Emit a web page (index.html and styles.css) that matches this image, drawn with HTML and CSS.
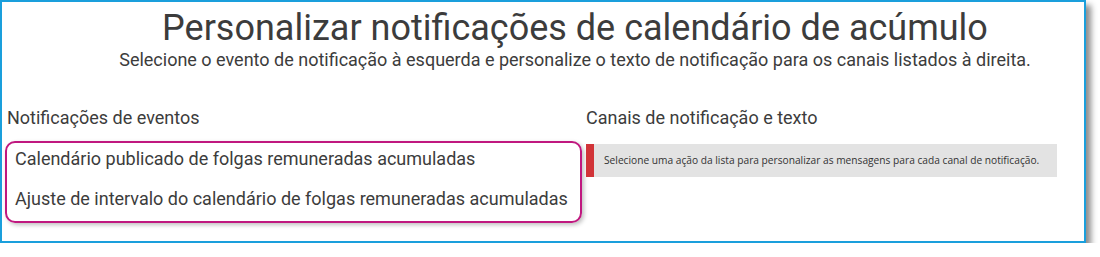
FILE: index.html
```html
<!DOCTYPE html>
<html lang="pt">
<head>
<meta charset="utf-8">
<link rel="stylesheet" href="styles.css">
</head>
<body>
<div class="frame">
  <header class="head">
    <h1 class="title">Personalizar notificações de calendário de acúmulo</h1>
    <p class="subtitle">Selecione o evento de notificação à esquerda e personalize o texto de notificação para os canais listados à direita.</p>
  </header>
  <div class="cols">
    <section class="col-left">
      <h2 class="col-title">Notificações de eventos</h2>
      <div class="events">
        <div class="event">Calendário publicado de folgas remuneradas acumuladas</div>
        <div class="event">Ajuste de intervalo do calendário de folgas remuneradas acumuladas</div>
      </div>
    </section>
    <section class="col-right">
      <h2 class="col-title">Canais de notificação e texto</h2>
      <div class="notice">Selecione uma ação da lista para personalizar as mensagens para cada canal de notificação.</div>
    </section>
  </div>
</div>
</body>
</html>
```
FILE: styles.css
```css
html, body {
  margin: 0;
  padding: 0;
  background: #ffffff;
}
body {
  font-family: Roboto, "Liberation Sans", sans-serif;
  color: #3c3c3c;
}
.frame {
  box-sizing: border-box;
  width: 1086px;
  height: 243px;
  border: 2px solid #1a9fdc;
  background: #ffffff;
  box-shadow: 5px 5px 6px rgba(0, 0, 0, 0.45);
}
.head {
  padding-left: 64px;
  text-align: center;
}
.title {
  margin: 0;
  padding-top: 6px;
  font-size: 36px;
  font-weight: 400;
  line-height: 40px;
  color: #3c3c3c;
}
.subtitle {
  margin: 2px 0 0;
  font-size: 18px;
  line-height: 20px;
  color: #3c3c3c;
}
.cols {
  display: flex;
  margin-top: 37px;
}
.col-left {
  width: 577px;
  padding-left: 3px;
}
.col-right {
  width: 471px;
  padding-left: 4px;
}
.col-title {
  margin: 0;
  font-size: 18px;
  font-weight: 400;
  line-height: 22px;
  color: #3c3c3c;
}
.col-left .col-title {
  padding-left: 2px;
}
.events {
  margin-top: 12px;
  border: 2.5px solid #c0187f;
  border-radius: 10px;
  padding: 4px 0 10px 8px;
  display: flex;
  flex-direction: column;
  gap: 16px;
  box-shadow: 2px 2px 4px rgba(0, 0, 0, 0.25);
}
.event {
  font-size: 18px;
  line-height: 24px;
  color: #3c3c3c;
}
.notice {
  margin-top: 15px;
  height: 33px;
  box-sizing: border-box;
  background: #e3e3e3;
  border-left: 8px solid #d13438;
  padding-left: 10px;
  font-family: "Open Sans", "Noto Sans", sans-serif;
  font-size: 10.2px;
  line-height: 33px;
  color: #333333;
}
```
